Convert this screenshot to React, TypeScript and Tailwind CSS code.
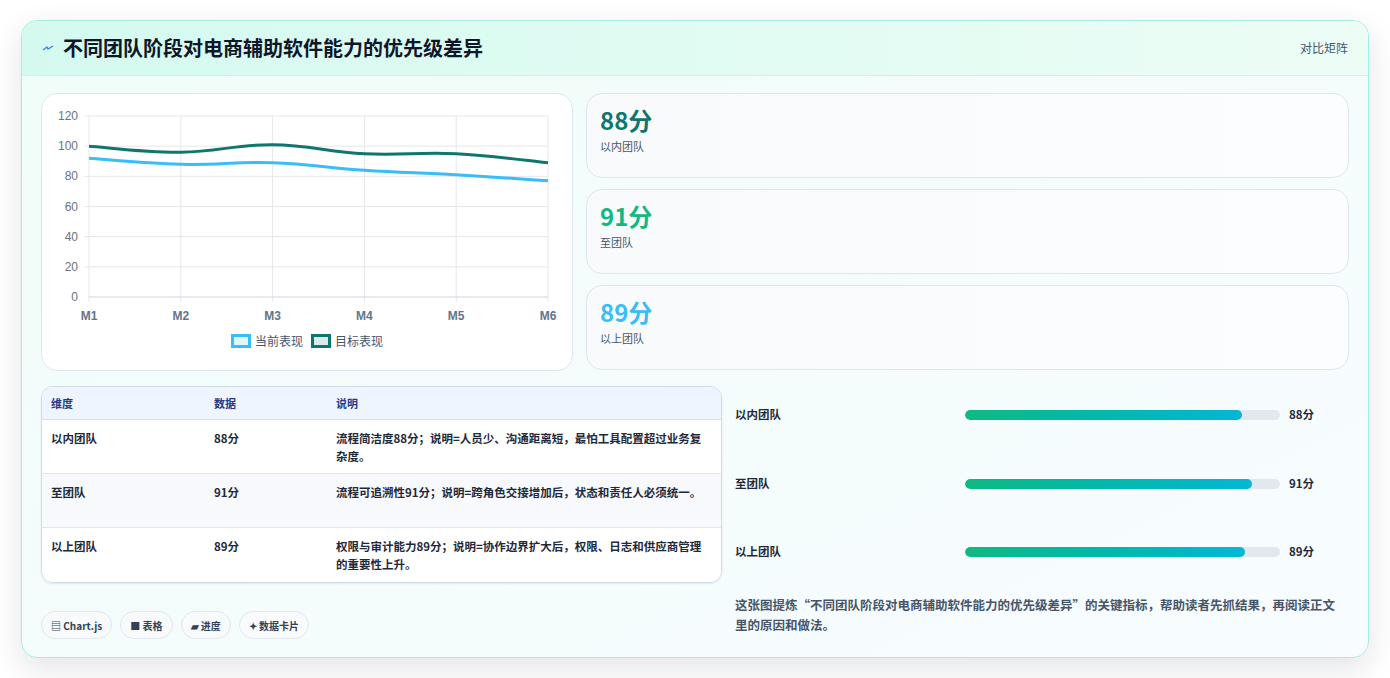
import React from 'react';

const font = { fontFamily: '"Noto Sans CJK SC", "Noto Sans", sans-serif' };

const cur = [92, 88, 89, 84, 81, 77];
const tgt = [100, 96, 101, 95, 95, 89];

const yOf = (v: number) => 203 - (v / 120) * 181;

function smooth(vals: number[]) {
  const pts = vals.map((v, i) => [47 + i * 91.8, yOf(v)]);
  let d = `M${pts[0][0]},${pts[0][1]}`;
  for (let i = 0; i < pts.length - 1; i++) {
    const p0 = pts[i - 1] || pts[i];
    const p1 = pts[i];
    const p2 = pts[i + 1];
    const p3 = pts[i + 2] || p2;
    const t = 0.2;
    const c1 = [p1[0] + (p2[0] - p0[0]) * t, p1[1] + (p2[1] - p0[1]) * t];
    const c2 = [p2[0] - (p3[0] - p1[0]) * t, p2[1] - (p3[1] - p1[1]) * t];
    d += ` C${c1[0]},${c1[1]} ${c2[0]},${c2[1]} ${p2[0]},${p2[1]}`;
  }
  return d;
}

function Chart() {
  const ys = [120, 100, 80, 60, 40, 20, 0];
  return (
    <svg width="531" height="277" className="block">
      {[0, 1, 2, 3, 4, 5].map((i) => (
        <g key={i}>
          <line x1={47 + i * 91.8} x2={47 + i * 91.8} y1="22" y2="208" stroke="#e5e7eb" />
          <text x={47 + i * 91.8} y="226" textAnchor="middle" fontSize="12" fontWeight="bold" fill="#64748b" fontFamily="Liberation Sans, sans-serif">M{i + 1}</text>
        </g>
      ))}
      {ys.map((v) => {
        const y = yOf(v);
        return (
          <g key={v}>
            <line x1={v === 0 ? 47 : 42} x2="506" y1={y} y2={y} stroke={v === 0 ? '#cbd5e1' : '#e5e7eb'} />
            <text x="36" y={y + 4} textAnchor="end" fontSize="12" fill="#6b7280" fontFamily="Liberation Sans, sans-serif">{v}</text>
          </g>
        );
      })}
      <path d={smooth(tgt)} fill="none" stroke="#0f766e" strokeWidth="3" />
      <path d={smooth(cur)} fill="none" stroke="#38bdf8" strokeWidth="3" />
    </svg>
  );
}

const rows = [
  ['以内团队', '88分', '流程简洁度88分；说明=人员少、沟通距离短，最怕工具配置超过业务复杂度。'],
  ['至团队', '91分', '流程可追溯性91分；说明=跨角色交接增加后，状态和责任人必须统一。'],
  ['以上团队', '89分', '权限与审计能力89分；说明=协作边界扩大后，权限、日志和供应商管理的重要性上升。'],
];

export default function App() {
  return (
    <div className="min-h-[678px] bg-white pt-5 px-[21px]" style={font}>
      <div className="rounded-2xl border border-[#a7ece0] bg-gradient-to-br from-[#f0fdf8] to-[#f8fcff] shadow-[0_10px_30px_rgba(15,23,42,0.12)] overflow-hidden">
        <div className="h-[55px] flex items-center justify-between px-5 bg-gradient-to-r from-[#d4faf0] to-[#ecfdf5] border-b border-[#d8ecf0]">
          <div className="flex items-center gap-[9px]">
            <svg width="12" height="10" viewBox="0 0 12 10"><path d="M1 7 L5 4 L6 6 L11 3" fill="none" stroke="#3b82f6" strokeWidth="1.3" /></svg>
            <h1 className="text-[20px] font-bold text-[#0f172a]">不同团队阶段对电商辅助软件能力的优先级差异</h1>
          </div>
          <span className="text-[12px] text-[#475569]">对比矩阵</span>
        </div>
        <div className="px-[19px] pt-[17px] pb-[18px]">
          <div className="flex gap-[13px]">
            <div className="w-[532px] h-[278px] rounded-2xl border border-[#dde7f0] bg-white relative">
              <Chart />
              <div className="absolute left-0 right-0 top-[238px] flex justify-center gap-2 text-[12px] text-[#475569]">
                <span className="flex items-center gap-1"><span className="w-[20px] h-[14px] border-[3px] border-[#38bdf8] bg-[#e0f5fe]" />当前表现</span>
                <span className="flex items-center gap-1"><span className="w-[20px] h-[14px] border-[3px] border-[#0f766e] bg-[#dbeae8]" />目标表现</span>
              </div>
            </div>
            <div className="flex-1 flex flex-col gap-[11px]">
              {[['88分', 'text-[#0f766e]', '以内团队'], ['91分', 'text-[#10b981]', '至团队'], ['89分', 'text-[#38bdf8]', '以上团队']].map(([v, c, l]) => (
                <div key={l} className="h-[85px] rounded-2xl border border-[#d9e8f2] bg-gradient-to-r from-[#f8fafc] to-[#fbfdff] px-[13px] pt-[9px]">
                  <div className={`text-[24px] font-bold leading-[34px] ${c}`}>{v}</div>
                  <div className="text-[11px] text-[#475569] mt-[1px]">{l}</div>
                </div>
              ))}
            </div>
          </div>
          <div className="flex gap-[13px] mt-[15px]">
            <div className="w-[681px] shrink-0">
              <div className="rounded-xl border border-[#d0dbe6] overflow-hidden shadow-[0_1px_2px_rgba(0,0,0,0.08)]">
                <div className="grid grid-cols-[163px_122px_1fr] h-[33px] items-center bg-[#eef5ff] border-b border-[#d5e0ec] px-[9px] text-[11px] font-bold text-[#1e3a8a]">
                  <span>维度</span><span>数据</span><span>说明</span>
                </div>
                {rows.map((r, i) => (
                  <div key={i} className={`grid grid-cols-[163px_122px_1fr] h-[54px] pt-[9px] px-[9px] text-[11.5px] leading-[18px] text-[#1e293b] font-semibold ${i < 2 ? 'border-b border-[#dfe6ee]' : ''} ${i === 1 ? 'bg-[#f7f9fc]' : 'bg-white'}`}>
                    <span>{r[0]}</span><span>{r[1]}</span><span className="pr-2">{r[2]}</span>
                  </div>
                ))}
              </div>
              <div className="flex gap-[8px] mt-[28px] text-[10px] font-bold text-[#334155]">
                {['▤ Chart.js', '■ 表格', '▰ 进度', '✦ 数据卡片'].map((t) => (
                  <span key={t} className="h-[28px] px-[9px] flex items-center rounded-full border border-[#e2e8f0] bg-[#f8fafc]">{t}</span>
                ))}
              </div>
            </div>
            <div className="flex-1 pt-[19px]">
              <div className="flex flex-col gap-[48.5px]">
                {[['以内团队', 88, '88分'], ['至团队', 91, '91分'], ['以上团队', 89, '89分']].map(([l, w, v]) => (
                  <div key={l as string} className="h-[20px] flex items-center text-[11.5px] font-semibold text-[#1e293b]">
                    <span className="w-[230px]">{l}</span>
                    <div className="w-[315px] h-[10px] rounded-full bg-[#e2e8f0] overflow-hidden">
                      <div className="h-full rounded-full bg-gradient-to-r from-[#10b981] to-[#06b6d4]" style={{ width: `${w as number}%` }} />
                    </div>
                    <span className="ml-[9px]">{v}</span>
                  </div>
                ))}
              </div>
              <p className="mt-[33px] text-[12.5px] leading-[20px] font-semibold text-[#475569] pr-2">这张图提炼“不同团队阶段对电商辅助软件能力的优先级差异”的关键指标，帮助读者先抓结果，再阅读正文里的原因和做法。</p>
            </div>
          </div>
        </div>
      </div>
    </div>
  );
}
